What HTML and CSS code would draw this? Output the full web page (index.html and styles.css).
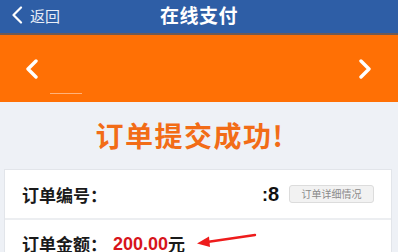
FILE: index.html
```html
<!DOCTYPE html>
<html lang="zh">
<head>
<meta charset="utf-8">
<link rel="stylesheet" href="styles.css">
</head>
<body>
<header class="topbar">
  <div class="back">
    <svg class="back-icon" width="12" height="18" viewBox="0 0 12 18"><path d="M10 1.5 L2.5 9 L10 16.5" fill="none" stroke="#fff" stroke-width="2.2" stroke-linecap="round" stroke-linejoin="round"/></svg>
    <span>返回</span>
  </div>
  <div class="title">在线支付</div>
  <div></div>
</header>
<section class="banner">
  <svg class="chev" width="16" height="20" viewBox="0 0 16 20"><path d="M12 2 L4 10 L12 18" fill="none" stroke="#fff" stroke-width="3.4" stroke-linecap="round" stroke-linejoin="round"/></svg>
  <span class="dash"></span>
  <svg class="chev" width="16" height="20" viewBox="0 0 16 20"><path d="M4 2 L12 10 L4 18" fill="none" stroke="#fff" stroke-width="3.4" stroke-linecap="round" stroke-linejoin="round"/></svg>
</section>
<main class="content">
  <h1 class="success">订单提交成功!</h1>
  <div class="card">
    <div class="row">
      <span class="label">订单编号：</span>
      <span class="num"><span class="cut">:</span>8</span>
      <span class="btn">订单详细情况</span>
    </div>
    <div class="row row-amount">
      <span class="label">订单金额：</span>
      <span class="amount">200.00</span><span class="label">元</span>
      <svg class="arrow" width="62" height="16" viewBox="0 0 62 16"><path d="M60 3 L12 10" stroke="#ee1c1c" stroke-width="2.4" stroke-linecap="round"/><path d="M2 11.5 L14 4.5 L15 15 Z" fill="#ee1c1c"/></svg>
    </div>
  </div>
</main>
</body>
</html>
```
FILE: styles.css
```css
* { box-sizing: border-box; }
html, body { margin: 0; padding: 0; }
body {
  width: 398px;
  height: 252px;
  overflow: hidden;
  background: #eef1f6;
  font-family: "Noto Sans CJK SC", "Noto Sans", sans-serif;
}
.topbar {
  height: 35px;
  background: #2e5ea6;
  border-bottom: 2px solid #6e5a55;
  display: grid;
  grid-template-columns: 1fr auto 1fr;
  align-items: center;
  color: #fff;
}
.back {
  display: flex;
  align-items: center;
  gap: 7px;
  padding-left: 11px;
  font-size: 15px;
  color: #e8eef8;
  margin-top: -3px;
}
.title {
  font-size: 19px;
  font-weight: 700;
  letter-spacing: 0.5px;
  margin-top: -4px;
}
.banner {
  height: 67px;
  background: #ff7005;
  display: flex;
  align-items: center;
  justify-content: space-between;
  padding: 0 25px 0 24px;
  position: relative;
}
.dash {
  position: absolute;
  left: 50px;
  top: 58px;
  width: 32px;
  height: 1px;
  background: #ffb27a;
}
.content {
  padding: 14px 6px 0 4px;
}
.success {
  margin: 0 0 15px 0;
  text-align: center;
  color: #f26c17;
  font-size: 28px;
  line-height: 38px;
  font-weight: 700;
  letter-spacing: 1.5px;
  padding-right: 16px;
}
.card {
  background: #fff;
  border: 1px solid #e2e5ea;
}
.row {
  height: 48px;
  display: flex;
  align-items: center;
  padding: 0 17px;
  position: relative;
}
.row + .row {
  border-top: 2px solid #eceef1;
}
.label {
  font-size: 17px;
  font-weight: 700;
  color: #1a1a1a;
}
.num {
  margin-left: auto;
  margin-right: 10px;
  font-size: 20px;
  font-weight: 700;
  color: #111;
  font-family: "Liberation Sans", sans-serif;
}
.cut { font-size: 18px; }
.btn {
  width: 85px;
  height: 18px;
  border: 1px solid #dcdcdc;
  border-radius: 3px;
  background: #f2f2f2;
  color: #8a8a8a;
  font-size: 10px;
  line-height: 16px;
  text-align: center;
}
.row-amount { align-items: flex-start; padding-top: 12px; }
.amount {
  margin-left: 6px;
  color: #d7141b;
  font-size: 18px;
  font-weight: 700;
  line-height: 24px;
  font-family: "Liberation Sans", sans-serif;
}
.row-amount .label { line-height: 24px; }
.arrow {
  position: absolute;
  left: 190px;
  top: 12px;
}
```
